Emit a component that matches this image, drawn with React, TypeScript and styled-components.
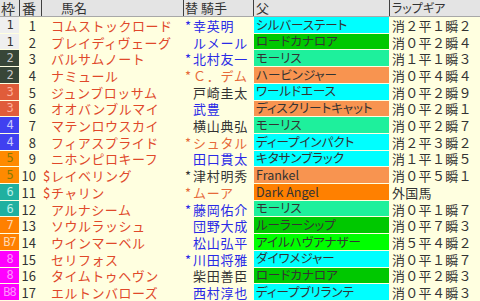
import styled, { createGlobalStyle } from "styled-components";

const Global = createGlobalStyle`
    html, body{
        margin: 0;
        padding: 0;
        background: #ffffe0;
    }
    *{ box-sizing: border-box; }
`

const COLS = "19px 22px 142px 70px 136px 91px";
const JP = `"Noto Sans CJK JP", "DejaVu Sans", sans-serif`;

const Board = styled.div`
    width: 480px;
    height: 301px;
    display: grid;
    grid-template-rows: 17px repeat(17, 1fr);
    background-color: #ffffe0;
    font-family: ${JP};
    color: #333;
    overflow: hidden;
`
const HeaderRow = styled.div`
    display: grid;
    grid-template-columns: ${COLS};
    background-color: #e4e4e4;
    border-bottom: 1px solid #a8a8a8;
`
const HeadCell = styled.div<{ $pad: number; $size?: number; $palt?: boolean; $first?: boolean }>`
    border-left: ${p => p.$first ? "0" : "1px solid #404040"};
    padding-left: ${p => p.$pad}px;
    font-size: ${p => p.$size ?? 13}px;
    font-feature-settings: ${p => p.$palt ? '"palt"' : "normal"};
    line-height: 16px;
    white-space: nowrap;
    color: #333;
`
const Row = styled.div`
    display: grid;
    grid-template-columns: ${COLS};
    min-height: 0;
    line-height: 1;
`
const Waku = styled.div<{ $bg: string; $fg: string }>`
    background-color: ${p => p.$bg};
    color: ${p => p.$fg};
    margin-bottom: 1px;
    display: flex;
    align-items: center;
    justify-content: center;
    font-size: 12px;
    font-family: "DejaVu Sans Mono", monospace;
    letter-spacing: -1px;
`
const Num = styled.div`
    display: flex;
    align-items: center;
    justify-content: flex-end;
    padding-right: 5px;
    font-size: 13px;
    color: #333;
`
const Name = styled.div`
    display: flex;
    align-items: center;
    padding-left: 2px;
    font-size: 13px;
    letter-spacing: 0.5px;
    color: #e0482a;
    white-space: nowrap;
`
const Mark = styled.span`
    display: inline-block;
    width: 8px;
    flex: none;
    letter-spacing: 0;
`
const JOCKEY = { blue: "#2a2ae6", red: "#e66a3a", dark: "#333333" };
const Jockey = styled.div<{ $tone: keyof typeof JOCKEY }>`
    display: flex;
    align-items: center;
    padding-left: 2px;
    font-size: 13px;
    letter-spacing: 0.75px;
    color: ${p => JOCKEY[p.$tone]};
    white-space: nowrap;
`
const Sire = styled.div<{ $bg: string }>`
    background-color: ${p => p.$bg};
    margin: 0 0 1px 1px;
    display: flex;
    align-items: center;
    padding-left: 2px;
    font-size: 12.5px;
    font-feature-settings: "palt";
    color: #333;
    white-space: nowrap;
`
const Lap = styled.div`
    display: flex;
    align-items: center;
    padding-left: 3px;
    font-size: 13px;
    letter-spacing: 0.3px;
    color: #333;
    white-space: nowrap;
`

const WAKU: Record<string, [string, string]> = {
    "1": ["#efefef", "#333"],
    "2": ["#384638", "#c8c8c8"],
    "3": ["#e05c3a", "#ffb09a"],
    "4": ["#4040f0", "#c8c8ff"],
    "5": ["#ff8a00", "#8a7a00"],
    "6": ["#20b0a0", "#b8f0e8"],
    "7": ["#ff8000", "#ffd8b0"],
    "8": ["#ff00ff", "#ff90ff"],
};

const SIRE = {
    cyan: "#00ffff",
    green: "#00c800",
    mint: "#1ef09c",
    orange: "#f89450",
    lime: "#00ff00",
    deep: "#ff8000",
};

type Horse = {
    waku: string;
    label?: string;
    num: number;
    mark?: string;
    name: string;
    jmark?: string;
    jockey: string;
    tone: keyof typeof JOCKEY;
    sire: string;
    sireBg: keyof typeof SIRE;
    lap: string;
};

const horses: Horse[] = [
    { waku: "1", num: 1, name: "コムストックロード", jmark: "*", jockey: "幸英明", tone: "blue", sire: "シルバーステート", sireBg: "cyan", lap: "消２平１瞬２" },
    { waku: "1", num: 2, name: "プレイディヴェーグ", jockey: "ルメール", tone: "blue", sire: "ロードカナロア", sireBg: "green", lap: "消０平２瞬４" },
    { waku: "2", num: 3, name: "バルサムノート", jmark: "*", jockey: "北村友一", tone: "blue", sire: "モーリス", sireBg: "mint", lap: "消１平１瞬３" },
    { waku: "2", num: 4, name: "ナミュール", jmark: "*", jockey: "Ｃ．デム", tone: "red", sire: "ハービンジャー", sireBg: "orange", lap: "消０平４瞬４" },
    { waku: "3", num: 5, name: "ジュンブロッサム", jockey: "戸崎圭太", tone: "dark", sire: "ワールドエース", sireBg: "cyan", lap: "消０平２瞬９" },
    { waku: "3", num: 6, name: "オオバンブルマイ", jockey: "武豊", tone: "blue", sire: "ディスクリートキャット", sireBg: "orange", lap: "消０平２瞬１" },
    { waku: "4", num: 7, name: "マテンロウスカイ", jockey: "横山典弘", tone: "dark", sire: "モーリス", sireBg: "mint", lap: "消０平２瞬７" },
    { waku: "4", num: 8, name: "フィアスプライド", jmark: "*", jockey: "シュタル", tone: "red", sire: "ディープインパクト", sireBg: "cyan", lap: "消２平３瞬２" },
    { waku: "5", num: 9, name: "ニホンピロキーフ", jockey: "田口貫太", tone: "blue", sire: "キタサンブラック", sireBg: "cyan", lap: "消１平１瞬５" },
    { waku: "5", num: 10, mark: "$", name: "レイベリング", jmark: "*", jockey: "津村明秀", tone: "dark", sire: "Frankel", sireBg: "orange", lap: "消０平５瞬１" },
    { waku: "6", num: 11, mark: "$", name: "チャリン", jmark: "*", jockey: "ムーア", tone: "red", sire: "Dark Angel", sireBg: "deep", lap: "外国馬" },
    { waku: "6", num: 12, name: "アルナシーム", jmark: "*", jockey: "藤岡佑介", tone: "blue", sire: "モーリス", sireBg: "mint", lap: "消０平１瞬７" },
    { waku: "7", num: 13, name: "ソウルラッシュ", jockey: "団野大成", tone: "blue", sire: "ルーラーシップ", sireBg: "green", lap: "消０平７瞬３" },
    { waku: "7", label: "B7", num: 14, name: "ウインマーベル", jockey: "松山弘平", tone: "blue", sire: "アイルハヴアナザー", sireBg: "lime", lap: "消５平４瞬２" },
    { waku: "8", num: 15, name: "セリフォス", jmark: "*", jockey: "川田将雅", tone: "blue", sire: "ダイワメジャー", sireBg: "cyan", lap: "消０平１瞬７" },
    { waku: "8", num: 16, name: "タイムトゥヘヴン", jockey: "柴田善臣", tone: "dark", sire: "ロードカナロア", sireBg: "green", lap: "消０平２瞬３" },
    { waku: "8", label: "B8", num: 17, name: "エルトンバローズ", jockey: "西村淳也", tone: "blue", sire: "ディープブリランテ", sireBg: "cyan", lap: "消０平４瞬３" },
];

function App() {
    return <>
        <Global />
        <Board>
            <HeaderRow>
                <HeadCell $first $pad={1} $size={14}>枠</HeadCell>
                <HeadCell $pad={2} $size={14}>番</HeadCell>
                <HeadCell $pad={19}>馬名</HeadCell>
                <HeadCell $pad={1}>替 騎手</HeadCell>
                <HeadCell $pad={2}>父</HeadCell>
                <HeadCell $pad={2} $size={12} $palt>ラップギア</HeadCell>
            </HeaderRow>
            {horses.map(h => {
                const [bg, fg] = WAKU[h.waku];
                return <Row key={h.num}>
                    <Waku $bg={bg} $fg={fg}>{h.label ?? h.waku}</Waku>
                    <Num>{h.num}</Num>
                    <Name><Mark>{h.mark ?? ""}</Mark>{h.name}</Name>
                    <Jockey $tone={h.tone}><Mark>{h.jmark ?? ""}</Mark>{h.jockey}</Jockey>
                    <Sire $bg={SIRE[h.sireBg]}>{h.sire}</Sire>
                    <Lap>{h.lap}</Lap>
                </Row>
            })}
        </Board>
    </>
}
export default App;
